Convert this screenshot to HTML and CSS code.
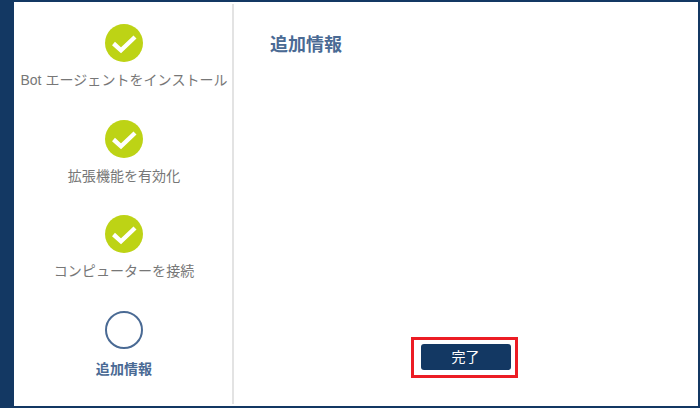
FILE: index.html
```html
<!DOCTYPE html>
<html lang="ja">
<head>
<meta charset="utf-8">
<title>追加情報</title>
<link rel="stylesheet" href="styles.css">
</head>
<body>
<div class="frame">
  <aside class="steps">
    <div class="step">
      <svg class="icon" viewBox="0 0 38 38"><circle cx="19" cy="19" r="19" fill="#bdd315"/><path d="M8.5 19.5 L16 26.3 L30 13" fill="none" stroke="#fff" stroke-width="4.4"/></svg>
      <div class="label">Bot エージェントをインストール</div>
    </div>
    <div class="step">
      <svg class="icon" viewBox="0 0 38 38"><circle cx="19" cy="19" r="19" fill="#bdd315"/><path d="M8.5 19.5 L16 26.3 L30 13" fill="none" stroke="#fff" stroke-width="4.4"/></svg>
      <div class="label">拡張機能を有効化</div>
    </div>
    <div class="step">
      <svg class="icon" viewBox="0 0 38 38"><circle cx="19" cy="19" r="19" fill="#bdd315"/><path d="M8.5 19.5 L16 26.3 L30 13" fill="none" stroke="#fff" stroke-width="4.4"/></svg>
      <div class="label">コンピューターを接続</div>
    </div>
    <div class="step">
      <svg class="icon" viewBox="0 0 38 38"><circle cx="19" cy="19" r="18" fill="none" stroke="#4a6a94" stroke-width="2"/></svg>
      <div class="label current">追加情報</div>
    </div>
  </aside>
  <main class="content">
    <h1 class="title">追加情報</h1>
    <div class="actions">
      <div class="highlight"><button class="done">完了</button></div>
    </div>
  </main>
</div>
</body>
</html>
```
FILE: styles.css
```css
* { box-sizing: border-box; }
html, body { margin: 0; height: 100%; }
body {
  font-family: "Liberation Sans", "Noto Sans CJK JP", sans-serif;
  background: #133863;
  overflow: hidden;
}
.frame {
  width: 700px;
  height: 408px;
  padding: 2px 2px 2px 14px;
  display: flex;
}
.frame > * { background: #fff; }
.steps {
  width: 220px;
  padding: 22px 0 0;
  flex: none;
  display: flex;
  flex-direction: column;
  position: relative;
}
.steps::after {
  content: "";
  position: absolute;
  top: 2px;
  bottom: 2px;
  right: 0;
  width: 2px;
  background: #e3e3e3;
}
.step {
  height: 96px;
  display: flex;
  flex-direction: column;
  align-items: center;
}
.icon { width: 38px; height: 38px; display: block; flex: none; }
.label {
  margin-top: 9px;
  font-size: 14px;
  letter-spacing: 0.05px;
  line-height: 18px;
  color: #777;
  white-space: nowrap;
}
.label.current {
  margin-top: 11px;
  color: #4a6a94;
  font-weight: 700;
  letter-spacing: 0.1px;
}
.content {
  flex: 1;
  display: flex;
  flex-direction: column;
  padding: 0 0 28px 36px;
}
.title {
  margin: 32px 0 0;
  font-size: 18px;
  line-height: 22px;
  font-weight: 700;
  color: #4a6a94;
}
.actions {
  margin-top: auto;
  display: flex;
  justify-content: center;
  padding-right: 40px;
}
.highlight {
  width: 107px;
  height: 41px;
  border: 3px solid #ec1c24;
  padding: 4px 0 0 7px;
}
.done {
  display: block;
  width: 90px;
  height: 26px;
  border: 0;
  border-radius: 3px;
  background: #133863;
  color: #fff;
  font: 14px/26px "Liberation Sans", "Noto Sans CJK JP", sans-serif;
  padding: 0;
}
```
